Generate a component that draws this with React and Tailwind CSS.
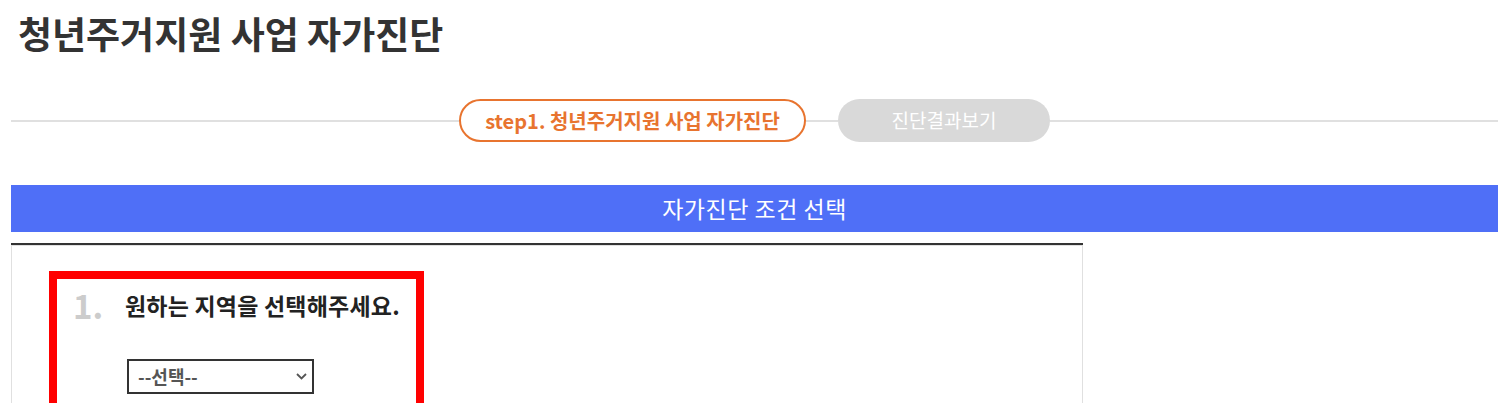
import React from "react";

export default function App() {
  return (
    <div className="w-[1509px] h-[403px] overflow-hidden bg-white font-['Noto_Sans_CJK_KR','Noto_Sans',sans-serif]">
      <h1 className="pl-[18px] h-[66px] leading-[66px] text-[37px] font-bold text-[#333]">
        청년주거지원 사업 자가진단
      </h1>

      <div className="px-[11px] mt-[33px] flex items-center">
        <div className="flex-1 h-[2px] bg-[#e0e0e0]" />
        <div className="w-[347px] h-[43px] rounded-full border-2 border-[#e8742f] bg-white flex items-center justify-center text-[20px] font-bold text-[#e8742f]">
          step1. 청년주거지원 사업 자가진단
        </div>
        <div className="w-[32px] h-[2px] bg-[#e0e0e0]" />
        <div className="w-[212px] h-[43px] rounded-full bg-[#d9d9d9] flex items-center justify-center text-[19px] text-white">
          진단결과보기
        </div>
        <div className="flex-1 h-[2px] bg-[#e0e0e0]" />
      </div>

      <div className="px-[11px] mt-[43px]">
        <div className="h-[47px] bg-[#4f6ff7] flex items-center justify-center text-[23px] tracking-[0.5px] text-white">
          자가진단 조건 선택
        </div>

        <div className="mt-[11px] w-[1072px] border-t-2 border-[#333]">
          <div className="border-x border-t border-[#e0e0e0] h-[200px] pl-[37px] pt-[25px]">
            <div className="w-[375px] border-[8px] border-[#f00] bg-white pl-[16px] pt-[5px] pb-[20px]">
              <div className="flex items-start">
                <span className="w-[52px] text-[33px] font-bold leading-[42px] text-[#ccc]">1.</span>
                <span className="text-[23px] font-bold leading-[42px] text-[#222] tracking-[0.2px]">
                  원하는 지역을 선택해주세요.
                </span>
              </div>
              <div className="mt-[33px] ml-[54px] relative w-[187px] h-[35px]">
                <select className="appearance-none w-full h-full border-2 border-[#333] bg-white pl-[9px] text-[18px] font-bold text-[#555] outline-none">
                  <option>--선택--</option>
                </select>
                <svg
                  className="absolute right-[7px] top-[14px] pointer-events-none"
                  width="11"
                  height="7"
                  viewBox="0 0 11 7"
                  fill="none"
                >
                  <path d="M1 1L5.5 5.5L10 1" stroke="#555" strokeWidth="1.8" />
                </svg>
              </div>
            </div>
          </div>
        </div>
      </div>
    </div>
  );
}
